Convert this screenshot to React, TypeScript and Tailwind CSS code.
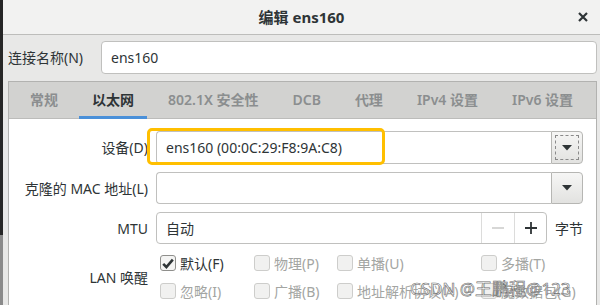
import React from "react";

const FONT = "font-['Noto_Sans','Noto_Sans_CJK_SC',sans-serif]";

const TABS = ["常规", "以太网", "802.1X 安全性", "DCB", "代理", "IPv4 设置", "IPv6 设置"];

function Caret() {
  return (
    <svg width="10" height="6" viewBox="0 0 10 6">
      <path d="M0 0h10L5 5.5z" fill="#2e3436" />
    </svg>
  );
}

function ComboButton({ focus }: { focus?: boolean }) {
  return (
    <div className="w-[32px] h-full border border-[#b6b6b3] rounded-r-[4px] bg-gradient-to-b from-[#f6f6f5] to-[#e2e2e0] flex items-center justify-center p-[3px]">
      <div
        className={
          "w-full h-full flex items-center justify-center " +
          (focus ? "border border-dashed border-[#8a8a8a]" : "")
        }
      >
        <Caret />
      </div>
    </div>
  );
}

function Check({ label, checked, disabled }: { label: string; checked?: boolean; disabled?: boolean }) {
  return (
    <div className="flex items-center gap-[4px]">
      <div
        className={
          "w-[16px] h-[16px] rounded-[3px] border flex items-center justify-center " +
          (checked ? "border-[#8f8f8c] bg-[#f4f4f3]" : "border-[#cdcdcb] bg-[#f1f1f0]")
        }
      >
        {checked && (
          <svg width="12" height="11" viewBox="0 0 12 11">
            <path d="M1.2 5.8l3.2 3.2L10.8 1.6" stroke="#2e3436" strokeWidth="2.6" fill="none" />
          </svg>
        )}
      </div>
      <span className={"text-[14px] " + (disabled ? "text-[#a3a5a2]" : "text-[#2e3436]")}>{label}</span>
    </div>
  );
}

export default function App() {
  return (
    <div className={"w-[600px] h-[305px] overflow-hidden relative flex bg-[#e8e8e7] text-[#2e3436] " + FONT}>
      {/* desktop edge behind window */}
      <div className="w-[3px] flex flex-col">
        <div className="h-[235px] bg-[#262626]" />
        <div className="flex-1 bg-[#8a8a8a]" />
      </div>

      <div className="flex-1 flex flex-col">
        {/* title bar */}
        <div className="h-[35px] shrink-0 bg-[#f2f2f1] border-b border-[#bdbdbb] grid grid-cols-[1fr_auto_1fr] items-center">
          <div />
          <div className="text-[15px] font-bold text-[#2e3436]">编辑 ens160</div>
          <div className="flex justify-end pr-[12px]">
            <svg width="10" height="10" viewBox="0 0 10 10">
              <path d="M1 1l8 8M9 1L1 9" stroke="#2e3436" strokeWidth="2.2" />
            </svg>
          </div>
        </div>

        {/* connection name */}
        <div className="flex items-center pl-[5px] pr-[3px] pt-[6px]">
          <span className="text-[14px] w-[93px]">连接名称(N)</span>
          <div className="flex-1 h-[33px] bg-white border border-[#c0c0be] rounded-[4px] flex items-center px-[9px] text-[14px]">
            ens160
          </div>
        </div>

        {/* notebook */}
        <div className="mt-[7px] ml-[5px] mr-[3px] flex-1 flex flex-col border border-[#b2b2b0] border-b-0">
          <div className="h-[37px] shrink-0 bg-[#d2d2d0] border-b border-[#bcbcba] flex items-stretch pl-[8px] gap-[8px]">
            {TABS.map((t, i) => (
              <div
                key={t}
                className={
                  "px-[13px] flex items-center text-[14px] whitespace-nowrap border-b-[3px] -mb-px " +
                  (i === 1
                    ? "border-[#4a90d9] font-bold text-[#2e3436]"
                    : "border-transparent font-semibold text-[#8b8e8f]")
                }
              >
                {t}
              </div>
            ))}
          </div>

          <div className="flex-1 bg-white pt-[12px] pr-[13px] grid grid-cols-[139px_1fr] gap-x-[8px] content-start">
            {/* device */}
            <div className="text-[14px] text-right self-center">设备(D)</div>
            <div className="h-[33px] flex">
              <div className="flex-1 border border-r-0 border-[#c0c0be] rounded-l-[4px] flex items-center pl-[9px] text-[14px]">
                ens160 (00:0C:29:F8:9A:C8)
              </div>
              <ComboButton focus />
            </div>

            {/* cloned MAC */}
            <div className="text-[14px] text-right self-center mt-[8px]">克隆的 MAC 地址(L)</div>
            <div className="h-[32px] flex mt-[8px]">
              <div className="flex-1 border border-r-0 border-[#c0c0be] rounded-l-[4px]" />
              <ComboButton />
            </div>

            {/* MTU */}
            <div className="text-[14px] text-right self-center mt-[8px]">MTU</div>
            <div className="h-[32px] flex items-center gap-[8px] mt-[8px]">
              <div className="flex-1 h-full border border-[#c0c0be] rounded-[4px] flex">
                <div className="flex-1 flex items-center pl-[9px] text-[14px]">自动</div>
                <div className="w-[33px] border-l border-[#dcdcdb] flex items-center justify-center">
                  <svg width="12" height="2" viewBox="0 0 12 2">
                    <path d="M0 1h12" stroke="#c6c6c4" strokeWidth="1.4" />
                  </svg>
                </div>
                <div className="w-[32px] border-l border-[#dcdcdb] flex items-center justify-center">
                  <svg width="12" height="12" viewBox="0 0 12 12">
                    <path d="M0 6h12M6 0v12" stroke="#2e3436" strokeWidth="1.8" />
                  </svg>
                </div>
              </div>
              <span className="text-[14px]">字节</span>
            </div>

            {/* wake on LAN */}
            <div className="text-[14px] text-right self-center mt-[5px]">LAN 唤醒</div>
            <div className="grid grid-cols-[94px_83px_144px_1fr] grid-rows-[28px_28px] items-center pl-[4px] mt-[5px]">
              <Check label="默认(F)" checked />
              <Check label="物理(P)" disabled />
              <Check label="单播(U)" disabled />
              <Check label="多播(T)" disabled />
              <Check label="忽略(I)" disabled />
              <Check label="广播(B)" disabled />
              <Check label="地址解析协议(A)" disabled />
              <Check label="魔数据包(G)" disabled />
            </div>
          </div>
        </div>
      </div>

      {/* screenshot annotation */}
      <div className="absolute left-[147px] top-[128px] w-[238px] h-[37px] border-[3px] border-[#ffbf00] rounded-[5px]" />

      {/* watermark */}
      <div className="absolute left-[410px] top-[276px] text-[17px] text-white/70 [-webkit-text-stroke:0.6px_#6b6b6b] whitespace-nowrap">
        CSDN @王鹏程@123
      </div>
    </div>
  );
}
